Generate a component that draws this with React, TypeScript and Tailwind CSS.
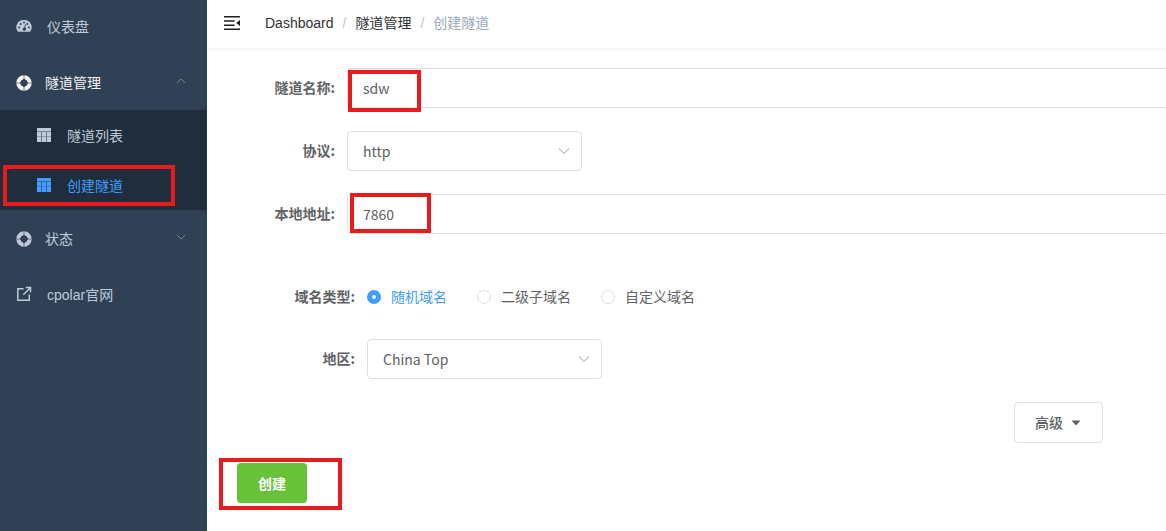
import { useState, type ReactNode } from "react";
import clsx from "clsx";

interface IconProps {
  className?: string;
}

function GaugeIcon({ className }: IconProps) {
  return (
    <svg className={className} viewBox="0 0 16 14" fill="currentColor" aria-hidden="true">
      <path
        fillRule="evenodd"
        d="M8 1a7.2 7.2 0 0 0-6.4 11.3q.2.5.8.5h11.2q.6 0 .8-.5A7.2 7.2 0 0 0 8 1ZM3.1 7.4a1 1 0 1 1 0 2 1 1 0 0 1 0-2Zm1.6-3.5a1 1 0 1 1 0 2 1 1 0 0 1 0-2ZM8 2.4a1 1 0 1 1 0 2 1 1 0 0 1 0-2Zm4.9 5a1 1 0 1 1 0 2 1 1 0 0 1 0-2Zm-1.6-3.5a1 1 0 1 1 0 2 1 1 0 0 1 0-2ZM9.1 5.2l.8.2-.7 3.2a1.7 1.7 0 1 1-.9-.2Z"
      />
    </svg>
  );
}

function RingIcon({ className }: IconProps) {
  return (
    <svg className={className} viewBox="0 0 16 16" aria-hidden="true">
      <circle cx="8" cy="8" r="5.5" fill="none" stroke="currentColor" strokeWidth="4.4" />
      <path d="M8 .3v5M8 10.7v5M.3 8h5M10.7 8h5" stroke="#304156" strokeWidth="1" opacity="0.6" />
      <path d="M8 3.6Q9.2 6.8 12.4 8 9.2 9.2 8 12.4 6.8 9.2 3.6 8 6.8 6.8 8 3.6Z" fill="#304156" />
      <circle cx="8" cy="8" r="3.4" fill="#304156" />
    </svg>
  );
}

function GridIcon({ className }: IconProps) {
  return (
    <svg className={className} viewBox="0 0 14 14" fill="currentColor" aria-hidden="true">
      <path d="M0 0h14v14H0Z" />
      <path d="M0 3.5h14" stroke="#1f2d3d" strokeWidth="1" opacity="0.45" />
      <path d="M4.5 4v10M9.5 4v10" stroke="#1f2d3d" strokeWidth="1" opacity="0.5" />
      <path d="M0 8.5h14" stroke="#1f2d3d" strokeWidth="1" opacity="0.25" />
    </svg>
  );
}

function ExternalIcon({ className }: IconProps) {
  return (
    <svg className={className} viewBox="0 0 16 16" fill="none" stroke="currentColor" strokeWidth="1.5" aria-hidden="true">
      <path d="M7.5 2.7H1.8v11.5h11.5V8.5M7.3 8.7l6.5-6.5M9.8 1.5h4.7v4.7" />
    </svg>
  );
}

function FoldIcon({ className }: IconProps) {
  return (
    <svg className={className} viewBox="0 0 16 14" fill="#1f1f1f" aria-hidden="true">
      <path d="M0 0h16v1.5H0ZM0 4.2h10.5v1.5H0ZM0 8.4h10.5v1.5H0ZM0 12.5h16V14H0ZM16 4v6l-3.8-3Z" />
    </svg>
  );
}

function Chevron({ className }: IconProps) {
  return (
    <svg className={className} viewBox="0 0 12 12" fill="none" stroke="currentColor" strokeWidth="1.1" aria-hidden="true">
      <path d="m1 3.5 5 5 5-5" />
    </svg>
  );
}

// Red frame drawn around whatever the reader should look at
function Mark({ className }: IconProps) {
  return <span className={clsx("pointer-events-none absolute border-4 border-[#e81c1c]", className)} />;
}

function MenuLink({ icon, children }: { icon: ReactNode; children: ReactNode }) {
  return (
    <a href="#" className="flex h-14 items-center gap-[15px] px-4 text-[#bfcbd9]">
      {icon}
      <span className="pt-0.5">{children}</span>
    </a>
  );
}

interface SubMenuProps {
  title: string;
  open?: boolean;
  children?: ReactNode;
}

function SubMenu({ title, open = false, children }: SubMenuProps) {
  return (
    <div>
      <button
        type="button"
        aria-expanded={open}
        className={clsx(
          "flex h-14 w-full items-center gap-[13px] pt-0.5 pr-[21px] pl-4",
          open ? "text-[#f4f4f5]" : "text-[#bfcbd9]",
        )}
      >
        <RingIcon className="size-4" />
        <span>{title}</span>
        <Chevron className={clsx("mb-1 ml-auto size-2.5 text-[#808b98]", open && "rotate-180")} />
      </button>
      {open ? <div className="bg-[#1f2d3d]">{children}</div> : null}
    </div>
  );
}

function SubLink({ active = false, children }: { active?: boolean; children: ReactNode }) {
  return (
    <a
      href="#"
      className={clsx("relative flex h-[50px] items-center gap-4 pl-[37px]", active ? "text-[#409eff]" : "text-[#bfcbd9]")}
    >
      <GridIcon className="size-3.5" />
      <span className="pt-0.5">{children}</span>
      {active ? <Mark className="inset-x-[3px] top-[5px] mr-[29px] h-[41px]" /> : null}
    </a>
  );
}

function Row({ id, label, wide = false, children }: { id: string; label: string; wide?: boolean; children: ReactNode }) {
  return (
    <div className="flex h-10 items-center">
      <label
        htmlFor={id}
        className={clsx("shrink-0 pr-3 pb-0.5 text-right font-bold text-[#606266]", wide ? "w-40" : "w-[140px]")}
      >
        {label}:
      </label>
      {children}
    </div>
  );
}

function TextBox({ id, value, mark }: { id: string; value: string; mark: string }) {
  return (
    <div className="relative flex-1">
      <input
        id={id}
        defaultValue={value}
        className="h-10 w-full rounded-sm border border-[#dcdfe6] bg-white px-[15px] text-[#606266] outline-none"
      />
      <Mark className={mark} />
    </div>
  );
}

function SelectBox({ id, options }: { id: string; options: string[] }) {
  return (
    <div className="relative w-[235px]">
      <select
        id={id}
        className="h-10 w-full appearance-none rounded-sm border border-[#dcdfe6] bg-white px-[15px] text-[#606266] outline-none"
      >
        {options.map((option) => (
          <option key={option}>{option}</option>
        ))}
      </select>
      <Chevron className="pointer-events-none absolute top-3.5 right-3 size-3 text-[#c0c4cc]" />
    </div>
  );
}

const domainTypes = ["随机域名", "二级子域名", "自定义域名"];

export default function App() {
  const [domainType, setDomainType] = useState(domainTypes[0]);

  return (
    <div className="flex min-h-screen bg-white font-['Liberation_Sans','Noto_Sans_CJK_SC',sans-serif] text-sm">
      <nav className="w-[207px] shrink-0 bg-[#304156]">
        <div className="-mt-0.5">
          <MenuLink icon={<GaugeIcon className="size-4" />}>仪表盘</MenuLink>
          <SubMenu title="隧道管理" open>
            <SubLink>隧道列表</SubLink>
            <SubLink active>创建隧道</SubLink>
          </SubMenu>
          <SubMenu title="状态" />
          <MenuLink icon={<ExternalIcon className="size-4" />}>cpolar官网</MenuLink>
        </div>
      </nav>

      <main className="min-w-0 flex-1 overflow-hidden">
        <header className="flex h-12 items-center bg-white pb-0.5 pl-[17px] shadow-[0_1px_4px_rgba(0,21,41,0.08)]">
          <button type="button" aria-label="Toggle sidebar" className="mr-[25px]">
            <FoldIcon className="h-3.5 w-4" />
          </button>
          <ol className="flex items-center text-[#303133]">
            <li>
              <a href="#">Dashboard</a>
            </li>
            <li className="px-[9px] text-[#c0c4cc]">/</li>
            <li>
              <a href="#">隧道管理</a>
            </li>
            <li className="px-[9px] text-[#c0c4cc]">/</li>
            <li className="text-[#97a8be]">创建隧道</li>
          </ol>
        </header>

        <form className="pt-5 font-['Noto_Sans_CJK_SC',sans-serif]" onSubmit={(event) => event.preventDefault()}>
          <div className="-mr-5 flex flex-col gap-[23px]">
            <Row id="name" label="隧道名称">
              <TextBox id="name" value="sdw" mark="top-0.5 left-px h-[42px] w-[73px]" />
            </Row>
            <Row id="protocol" label="协议">
              <SelectBox id="protocol" options={["http", "tcp"]} />
            </Row>
            <Row id="address" label="本地地址">
              <TextBox id="address" value="7860" mark="top-[-1px] left-[3px] h-10 w-[81px]" />
            </Row>
          </div>

          <div className="mt-[43px] flex flex-col gap-[22px]">
            <div role="radiogroup" aria-labelledby="domain-type" className="flex h-10 items-center">
              <span id="domain-type" className="w-40 pr-3 pb-0.5 text-right font-bold text-[#606266]">
                域名类型:
              </span>
              <div className="flex gap-[30px]">
                {domainTypes.map((type) => (
                  <label
                    key={type}
                    className={clsx("flex items-center gap-2.5", type === domainType ? "text-[#409eff]" : "text-[#606266]")}
                  >
                    <input
                      type="radio"
                      name="domain-type"
                      checked={type === domainType}
                      onChange={() => setDomainType(type)}
                      className="size-3.5 appearance-none rounded-full border border-[#dcdfe6] bg-white checked:border-5 checked:border-[#409eff]"
                    />
                    <span className="pb-0.5">{type}</span>
                  </label>
                ))}
              </div>
            </div>
            <Row id="region" label="地区" wide>
              <SelectBox id="region" options={["China Top", "China VIP"]} />
            </Row>
          </div>

          <div className="mt-[23px] mr-[63px] flex justify-end">
            <button
              type="button"
              className="flex h-[41px] items-center gap-2 rounded-sm border border-[#dcdfe6] px-5 pb-0.5 font-medium text-[#606266]"
            >
              高级
              <svg className="mt-0.5 mr-px h-1.5 w-2.5" viewBox="0 0 10 6" fill="currentColor" aria-hidden="true">
                <path d="M.5.5h9L5 5.5Z" />
              </svg>
            </button>
          </div>

          <div className="mt-5 ml-[30px] flex">
            <div className="relative">
              <button type="submit" className="h-10 w-[70px] rounded-sm bg-[#67c23a] font-bold text-white">
                创建
              </button>
              <Mark className="top-[-5px] left-[-18px] h-[52px] w-[123px]" />
            </div>
          </div>
        </form>
      </main>
    </div>
  );
}
